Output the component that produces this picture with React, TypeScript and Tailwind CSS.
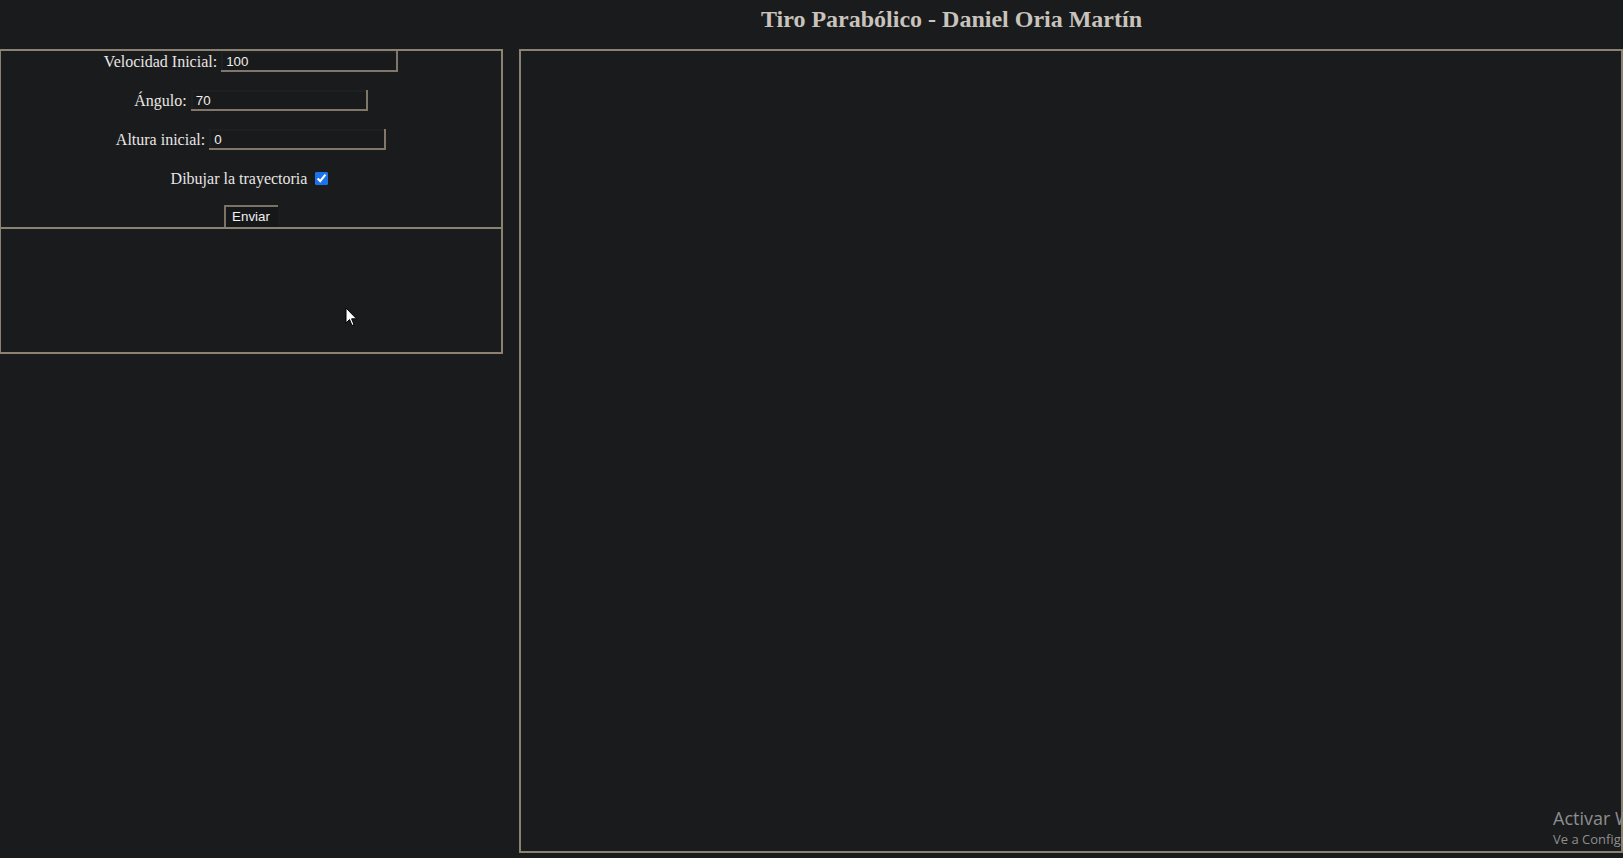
import { useState } from "react";

const FIELDS = [
  { label: "Velocidad Inicial:", value: "100" },
  { label: "Ángulo:", value: "70" },
  { label: "Altura inicial:", value: "0" },
];

function Field({ label, value, first }: { label: string; value: string; first?: boolean }) {
  const [v, setV] = useState(value);
  return (
    <div className={`flex h-[21px] items-center justify-center gap-[4px] ${first ? "" : "mt-[18px]"}`}>
      <label className="text-[16px] text-[#e8e6e3]">{label}</label>
      <div className="flex h-[21px] w-[177px] border-r-2 border-b-2 border-[#80776a] bg-[#1d1f20] pl-[2px] pt-[2px]">
        <input
          value={v}
          onChange={(e) => setV(e.target.value)}
          className="h-full w-full bg-[#181a1b] px-[3px] font-['Liberation_Sans',Arial,sans-serif] text-[13.33px] text-[#f0eeeb] outline-none"
        />
      </div>
    </div>
  );
}

export default function App() {
  return (
    <div className="relative h-[858px] w-full overflow-hidden bg-[#1a1b1d] font-['Liberation_Serif','Times_New_Roman',serif]">
      <header className="h-[49px] pl-[280px] pt-[6px] text-center">
        <h2 className="text-[24px] font-bold leading-[26px] text-[#c8c3bc]">Tiro Parabólico - Daniel Oria Martín</h2>
      </header>

      <div className="flex gap-[16px]">
        <div className="w-[503px] shrink-0">
          <form
            onSubmit={(e) => e.preventDefault()}
            className="h-[180px] overflow-hidden border-2 border-l border-[#8c8273]"
          >
            {FIELDS.map((f, i) => (
              <Field key={f.label} label={f.label} value={f.value} first={i === 0} />
            ))}
            <div className="mt-[18px] flex h-[21px] items-center justify-center">
              <label className="text-[16px] text-[#e8e6e3]">Dibujar la trayectoria</label>
              <input type="checkbox" defaultChecked className="ml-[8px] mr-[3px] h-[13px] w-[13px] accent-[#1a73e8]" />
            </div>
            <div className="mt-[16px] flex justify-center">
              <button
                type="submit"
                className="h-[22px] border-t-2 border-l-2 border-[#7a7264] bg-[#161718] pl-[6px] pr-[8px] font-['Liberation_Sans',Arial,sans-serif] text-[13.33px] leading-[16px] text-[#f2f2f2]"
              >
                Enviar
              </button>
            </div>
          </form>
          <div className="h-[125px] border-b-2 border-l border-r-2 border-[#8c8273]" />
        </div>

        <div className="h-[804px] w-[1104px] shrink-0 border-2 border-[#8c8273]" />
      </div>

      {/* windows activation watermark */}
      <div className="absolute left-[1553px] top-[806px] whitespace-nowrap font-['Open_Sans','Noto_Sans',sans-serif] text-[#8e8e8e]">
        <div className="text-[18px] leading-[24px]">Activar Windows</div>
        <div className="text-[13px] leading-[18px]">Ve a Configuración para activar Windows.</div>
      </div>

      {/* mouse pointer */}
      <svg className="absolute left-[345px] top-[307px]" width="13" height="20" viewBox="0 0 13 20">
        <path d="M1 1 L1 16 L4.5 12.5 L7 18.5 L9 17.6 L6.6 11.8 L11.5 11.8 Z" fill="#fff" stroke="#000" strokeWidth="1" />
      </svg>
    </div>
  );
}
